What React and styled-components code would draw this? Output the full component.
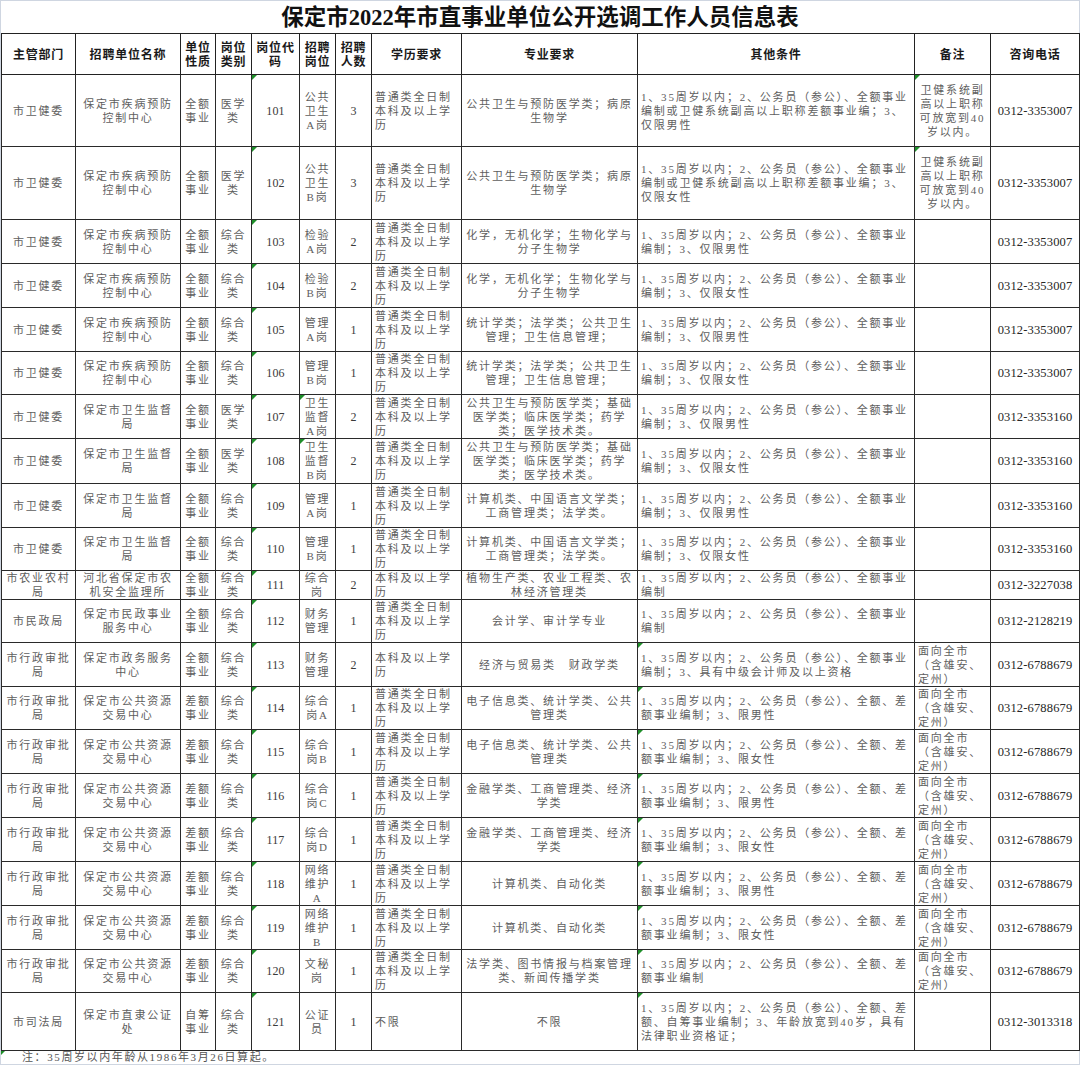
import React from 'react'
import styled, { createGlobalStyle } from 'styled-components'

const GlobalStyle = createGlobalStyle`
	body {
		margin: 0;
		background: #fff;
	}
`

const MIXED_FONT = `"Liberation Serif", "Noto Sans CJK SC", serif`

const COLS = [74, 105, 35, 36, 48, 36, 36, 90, 176, 277, 76, 89]

const HEADERS = [
	'主管部门',
	'招聘单位名称',
	'单位\n性质',
	'岗位\n类别',
	'岗位代\n码',
	'招聘\n岗位',
	'招聘\n人数',
	'学历要求',
	'专业要求',
	'其他条件',
	'备注',
	'咨询电话',
]

// Shared texts that repeat across many rows
const EDU_FULL = '普通类全日制\n本科及以上学\n历'
const EDU_BK = '本科及以上学\n历'
const CDC = '保定市疾病预防\n控制中心'
const SUPERVISION = '保定市卫生监督\n局'
const RESOURCE = '保定市公共资源\n交易中心'
const NOTE_WJ = '卫健系统副\n高以上职称\n可放宽到40\n岁以内。'
const NOTE_CITY = '面向全市\n（含雄安、\n定州）'

const full = tail => `1、35周岁以内；2、公务员（参公）、全额事业\n编制；3、${tail}`
const diff = tail => `1、35周岁以内；2、公务员（参公）、全额、差\n额事业编制；3、${tail}`

const ROWS = [
	{ h: 72, dept: '市卫健委', unit: CDC, kind: '全额\n事业', cat: '医学\n类', code: '101', post: '公共\n卫生\nA岗', n: '3', edu: EDU_FULL, major: '公共卫生与预防医学类；病原\n生物学', other: '1、35周岁以内；2、公务员（参公）、全额事业\n编制或卫健系统副高以上职称差额事业编；3、\n仅限男性', note: NOTE_WJ, noteCenter: true, noteMark: true, tel: '0312-3353007' },
	{ h: 73, dept: '市卫健委', unit: CDC, kind: '全额\n事业', cat: '医学\n类', code: '102', post: '公共\n卫生\nB岗', n: '3', edu: EDU_FULL, major: '公共卫生与预防医学类；病原\n生物学', other: '1、35周岁以内；2、公务员（参公）、全额事业\n编制或卫健系统副高以上职称差额事业编；3、\n仅限女性', note: NOTE_WJ, noteCenter: true, noteMark: true, tel: '0312-3353007' },
	{ h: 44, dept: '市卫健委', unit: CDC, kind: '全额\n事业', cat: '综合\n类', code: '103', post: '检验\nA岗', n: '2', edu: EDU_FULL, major: '化学，无机化学；生物化学与\n分子生物学', other: full('仅限男性'), tel: '0312-3353007' },
	{ h: 44, dept: '市卫健委', unit: CDC, kind: '全额\n事业', cat: '综合\n类', code: '104', post: '检验\nB岗', n: '2', edu: EDU_FULL, major: '化学，无机化学；生物化学与\n分子生物学', other: full('仅限女性'), tel: '0312-3353007' },
	{ h: 44, dept: '市卫健委', unit: CDC, kind: '全额\n事业', cat: '综合\n类', code: '105', post: '管理\nA岗', n: '1', edu: EDU_FULL, major: '统计学类；法学类；公共卫生\n管理；卫生信息管理；', other: full('仅限男性'), tel: '0312-3353007' },
	{ h: 43, dept: '市卫健委', unit: CDC, kind: '全额\n事业', cat: '综合\n类', code: '106', post: '管理\nB岗', n: '1', edu: EDU_FULL, major: '统计学类；法学类；公共卫生\n管理；卫生信息管理；', other: full('仅限女性'), tel: '0312-3353007' },
	{ h: 44, dept: '市卫健委', unit: SUPERVISION, kind: '全额\n事业', cat: '医学\n类', code: '107', post: '卫生\n监督\nA岗', postMark: true, n: '2', edu: EDU_FULL, major: '公共卫生与预防医学类；基础\n医学类；临床医学类；药学\n类；医学技术类。', other: full('仅限男性'), tel: '0312-3353160' },
	{ h: 45, dept: '市卫健委', unit: SUPERVISION, kind: '全额\n事业', cat: '医学\n类', code: '108', post: '卫生\n监督\nB岗', postMark: true, n: '2', edu: EDU_FULL, major: '公共卫生与预防医学类；基础\n医学类；临床医学类；药学\n类；医学技术类。', other: full('仅限女性'), tel: '0312-3353160' },
	{ h: 44, dept: '市卫健委', unit: SUPERVISION, kind: '全额\n事业', cat: '综合\n类', code: '109', post: '管理\nA岗', n: '1', edu: EDU_FULL, major: '计算机类、中国语言文学类；\n工商管理类；法学类。', other: full('仅限男性'), tel: '0312-3353160' },
	{ h: 43, dept: '市卫健委', unit: SUPERVISION, kind: '全额\n事业', cat: '综合\n类', code: '110', post: '管理\nB岗', n: '1', edu: EDU_FULL, major: '计算机类、中国语言文学类；\n工商管理类；法学类。', other: full('仅限女性'), tel: '0312-3353160' },
	{ h: 29, dept: '市农业农村\n局', unit: '河北省保定市农\n机安全监理所', kind: '全额\n事业', cat: '综合\n类', code: '111', post: '综合\n岗', n: '2', edu: EDU_BK, major: '植物生产类、农业工程类、农\n林经济管理类', other: '1、35周岁以内；2、公务员（参公）、全额事业\n编制', tel: '0312-3227038' },
	{ h: 43, dept: '市民政局', unit: '保定市民政事业\n服务中心', kind: '全额\n事业', cat: '综合\n类', code: '112', post: '财务\n管理', n: '1', edu: EDU_FULL, major: '会计学、审计学专业', other: '1、35周岁以内；2、公务员（参公）、全额事业\n编制', tel: '0312-2128219' },
	{ h: 44, dept: '市行政审批\n局', unit: '保定市政务服务\n中心', kind: '全额\n事业', cat: '综合\n类', code: '113', post: '财务\n管理', n: '2', edu: EDU_BK, major: '经济与贸易类　财政学类', other: full('具有中级会计师及以上资格'), otherMark: true, note: NOTE_CITY, tel: '0312-6788679' },
	{ h: 43, dept: '市行政审批\n局', unit: RESOURCE, kind: '差额\n事业', cat: '综合\n类', code: '114', post: '综合\n岗A', n: '1', edu: EDU_FULL, major: '电子信息类、统计学类、公共\n管理类', other: diff('限男性'), otherMark: true, note: NOTE_CITY, tel: '0312-6788679' },
	{ h: 44, dept: '市行政审批\n局', unit: RESOURCE, kind: '差额\n事业', cat: '综合\n类', code: '115', post: '综合\n岗B', n: '1', edu: EDU_FULL, major: '电子信息类、统计学类、公共\n管理类', other: diff('限女性'), otherMark: true, note: NOTE_CITY, tel: '0312-6788679' },
	{ h: 44, dept: '市行政审批\n局', unit: RESOURCE, kind: '差额\n事业', cat: '综合\n类', code: '116', post: '综合\n岗C', n: '1', edu: EDU_FULL, major: '金融学类、工商管理类、经济\n学类', other: diff('限男性'), otherMark: true, note: NOTE_CITY, tel: '0312-6788679' },
	{ h: 44, dept: '市行政审批\n局', unit: RESOURCE, kind: '差额\n事业', cat: '综合\n类', code: '117', post: '综合\n岗D', n: '1', edu: EDU_FULL, major: '金融学类、工商管理类、经济\n学类', other: diff('限女性'), otherMark: true, note: NOTE_CITY, tel: '0312-6788679' },
	{ h: 44, dept: '市行政审批\n局', unit: RESOURCE, kind: '差额\n事业', cat: '综合\n类', code: '118', post: '网络\n维护\nA', n: '1', edu: EDU_FULL, major: '计算机类、自动化类', other: diff('限男性'), otherMark: true, note: NOTE_CITY, tel: '0312-6788679' },
	{ h: 44, dept: '市行政审批\n局', unit: RESOURCE, kind: '差额\n事业', cat: '综合\n类', code: '119', post: '网络\n维护\nB', n: '1', edu: EDU_FULL, major: '计算机类、自动化类', other: diff('限女性'), otherMark: true, note: NOTE_CITY, tel: '0312-6788679' },
	{ h: 43, dept: '市行政审批\n局', unit: RESOURCE, kind: '差额\n事业', cat: '综合\n类', code: '120', post: '文秘\n岗', n: '1', edu: EDU_FULL, major: '法学类、图书情报与档案管理\n类、新闻传播学类', other: '1、35周岁以内；2、公务员（参公）、全额、差\n额事业编制', otherMark: true, note: NOTE_CITY, tel: '0312-6788679' },
	{ h: 58, dept: '市司法局', unit: '保定市直隶公证\n处', kind: '自筹\n事业', cat: '综合\n类', code: '121', post: '公证\n员', n: '1', edu: '不限', major: '不限', other: '1、35周岁以内；2、公务员（参公）、全额、差\n额、自筹事业编制；3、年龄放宽到40岁，具有\n法律职业资格证；', otherMark: true, tel: '0312-3013318' },
]

export default () => (
	<>
		<GlobalStyle />
		<Sheet>
			<Title>保定市2022年市直事业单位公开选调工作人员信息表</Title>
			<Grid>
				<colgroup>
					{COLS.map((w, i) => (
						<col key={i} style={{ width: w }} />
					))}
				</colgroup>
				<thead>
					<Row $h={41}>
						{HEADERS.map(label => (
							<Head key={label}>{label}</Head>
						))}
					</Row>
				</thead>
				<tbody>
					{ROWS.map(row => (
						<Row key={row.code} $h={row.h}>
							<Cell>{row.dept}</Cell>
							<Cell>{row.unit}</Cell>
							<Cell>{row.kind}</Cell>
							<Cell>{row.cat}</Cell>
							<Cell $num $mark>
								{row.code}
							</Cell>
							<Cell $mark={row.postMark}>{row.post}</Cell>
							<Cell $num>{row.n}</Cell>
							<Cell $left>{row.edu}</Cell>
							<Cell>{row.major}</Cell>
							<Cell $left $mark={row.otherMark}>
								{row.other}
							</Cell>
							<Cell $left={!row.noteCenter} $mark={row.noteMark}>
								{row.note || ''}
							</Cell>
							<Cell $tel>{row.tel}</Cell>
						</Row>
					))}
				</tbody>
			</Grid>
			<Footnote>注：35周岁以内年龄从1986年3月26日算起。</Footnote>
		</Sheet>
	</>
)

const Sheet = styled.div`
	width: 1078px;
	border: 1px solid #cfd6e1;
	background: #fff;
`

const Title = styled.h1`
	margin: 0;
	height: 32px;
	line-height: 34px;
	text-align: center;
	font-family: ${MIXED_FONT};
	font-size: 22.5px;
	font-weight: 700;
	color: #111;
`

const Grid = styled.table`
	width: 1078px;
	table-layout: fixed;
	border-collapse: collapse;
	font-family: ${MIXED_FONT};
`

const Row = styled.tr`
	height: ${p => p.$h}px;
`

const Head = styled.th`
	border: 1px solid #222;
	padding: 0;
	white-space: pre;
	text-align: center;
	vertical-align: middle;
	font-family: "Noto Sans CJK SC", sans-serif;
	font-size: 12px;
	font-weight: 700;
	line-height: 14px;
	letter-spacing: 0.8px;
	color: #1a1a1a;
`

// Excel style green marker in the top left corner of a cell
const Cell = styled.td`
	position: relative;
	border: 1px solid #2a2a2a;
	padding: ${p => (p.$left ? '0 0 0 3px' : '0')};
	white-space: pre;
	overflow: hidden;
	text-align: ${p => (p.$left ? 'left' : 'center')};
	vertical-align: middle;
	font-size: ${p => (p.$num ? '12px' : p.$tel ? '12.5px' : '11px')};
	line-height: 14px;
	letter-spacing: ${p => (p.$num || p.$tel ? '0.15px' : '1.8px')};
	color: ${p => (p.$num ? '#3a3a3a' : p.$tel ? '#262626' : '#5e5e5e')};

	${p =>
		p.$mark &&
		`
		&::before {
			content: '';
			position: absolute;
			top: 0;
			left: 0;
			border-top: 5px solid #1f8f2a;
			border-right: 5px solid transparent;
		}
	`}
`

const Footnote = styled.div`
	position: relative;
	height: 13px;
	padding-left: 21px;
	font-family: ${MIXED_FONT};
	font-size: 11px;
	line-height: 13px;
	letter-spacing: 1.6px;
	color: #555;

	&::before {
		content: '';
		position: absolute;
		top: 0;
		left: 0;
		border-top: 4px solid #1f8f2a;
		border-right: 4px solid transparent;
	}
`
